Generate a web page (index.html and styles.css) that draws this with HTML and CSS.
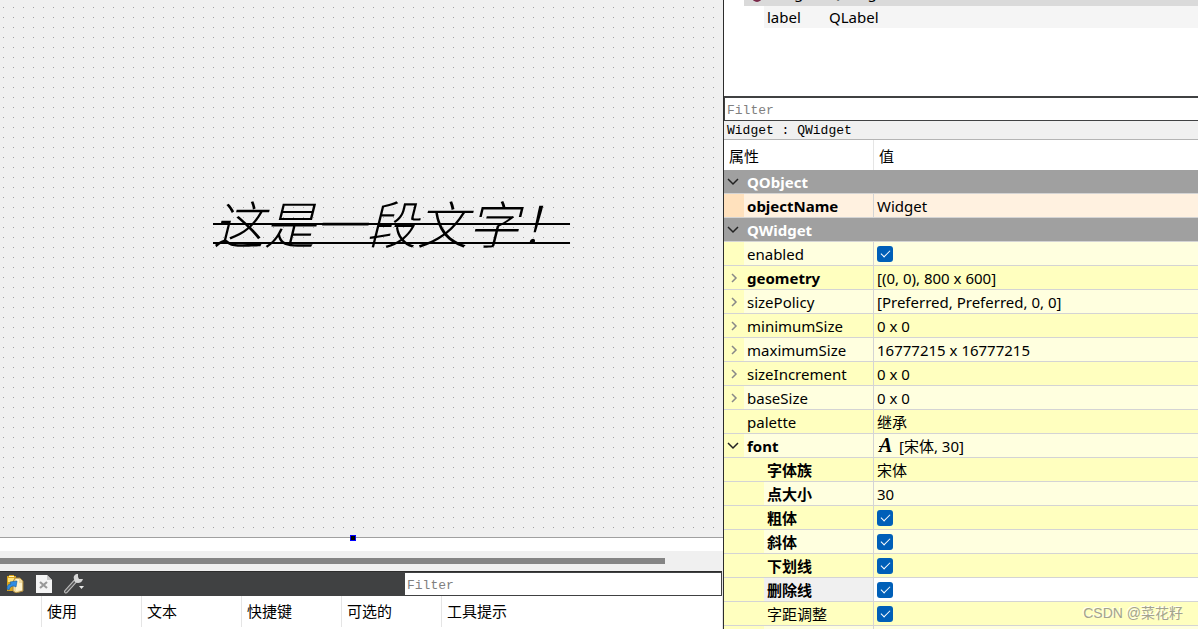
FILE: index.html
```html
<!DOCTYPE html>
<html lang="zh-CN">
<head>
<meta charset="utf-8">
<title>Designer</title>
<link rel="stylesheet" href="styles.css">
</head>
<body>
<div class="designer">
  <main class="workspace">
    <section class="canvas">
      <div class="form-grid">
        <span class="form-label">这是一段文字！</span>
        <span class="resize-handle"></span>
      </div>
      <div class="scrollbar"><div class="scroll-thumb"></div></div>
    </section>
    <section class="action-dock">
      <div class="toolbar">
        <button class="tool" aria-label="Copy">
          <svg width="18" height="18" viewBox="0 0 18 18">
            <path d="M1 1h2V0h5v1h2v15H1z" fill="#d9a41c"/>
            <path d="M2 3h7v4H2z" fill="#ffe27a"/>
            <path d="M3 1h5v1H3z" fill="#fff6c0"/>
            <path d="M9 3h5l3 3v10l-7 2-3-2V7z" fill="#f2dda0" stroke="#a8863c" stroke-width="1"/>
            <path d="M10 4h3v4h3v7l-6 1z" fill="#fff3cd"/>
            <path d="M1 14c0-3 1-5 4-5L4 7l7-1-1 6-2-1c-3 0-4 1-5 4z" fill="#2f8de4" stroke="#135a9f" stroke-width=".6"/>
          </svg>
        </button>
        <button class="tool" aria-label="Delete">
          <svg width="18" height="18" viewBox="0 0 18 18">
            <path d="M1 0h11l5 5v13H1z" fill="#f4f4f4"/>
            <path d="M12 0v5h5z" fill="#c9c9c9"/>
            <path d="M5 7l7 6m0-6l-7 6" stroke="#999" stroke-width="2.200"/>
          </svg>
        </button>
        <button class="tool tool-menu" aria-label="Configure">
          <svg width="22" height="20" viewBox="0 0 22 20">
            <path d="M2 17.500L11 7.500" stroke="#bdbdbd" stroke-width="4" stroke-linecap="round"/>
            <path d="M2 17.500L11 7.500" stroke="#565656" stroke-width="1.800" stroke-linecap="round"/>
            <path d="M14 0c-3 0-5 2-4 5 0 3 2 4 4 4 2 0 4-1 5-4l-4 0-1-2z" fill="#d6d6d6"/>
            <path d="M15 12h5l-2.500 3z" fill="#e8e8e8"/>
          </svg>
        </button>
        <input class="filter" type="text" placeholder="Filter" aria-label="Filter actions">
      </div>
      <table class="actions">
        <thead>
          <tr><th class="col-name"></th><th class="col">使用</th><th class="col">文本</th><th class="col">快捷键</th><th class="col">可选的</th><th>工具提示</th></tr>
        </thead>
      </table>
    </section>
  </main>

  <aside class="inspector">
    <section class="object-tree">
      <table class="objects">
        <tr class="selected"><td class="indent"></td><td class="object-name"><span class="object-icon"></span>Widget</td><td>QWidget</td></tr>
        <tr class="child"><td class="indent"></td><td class="object-name">label</td><td>QLabel</td></tr>
      </table>
    </section>
    <input class="filter filter-wide" type="text" placeholder="Filter" aria-label="Filter properties">
    <div class="object-title">Widget : QWidget</div>
    <table class="props">
      <thead><tr><th class="prop-col">属性</th><th>值</th></tr></thead>
      <tbody>
        <tr class="group"><td colspan="2"><svg class="arrow" viewBox="0 0 10 10"><path d="M0 2l5 5 5-5"/></svg>QObject</td></tr>
        <tr class="peach bold"><td>objectName</td><td>Widget</td></tr>
        <tr class="group"><td colspan="2"><svg class="arrow" viewBox="0 0 10 10"><path d="M0 2l5 5 5-5"/></svg>QWidget</td></tr>
        <tr class="light"><td><label for="enabled">enabled</label></td><td><input type="checkbox" id="enabled" checked></td></tr>
        <tr class="bold"><td><svg class="arrow closed" viewBox="0 0 10 10"><path d="M4 1l4 4-4 4"/></svg>geometry</td><td>[(0, 0), 800 x 600]</td></tr>
        <tr class="light"><td><svg class="arrow closed" viewBox="0 0 10 10"><path d="M4 1l4 4-4 4"/></svg>sizePolicy</td><td>[Preferred, Preferred, 0, 0]</td></tr>
        <tr><td><svg class="arrow closed" viewBox="0 0 10 10"><path d="M4 1l4 4-4 4"/></svg>minimumSize</td><td>0 x 0</td></tr>
        <tr class="light"><td><svg class="arrow closed" viewBox="0 0 10 10"><path d="M4 1l4 4-4 4"/></svg>maximumSize</td><td>16777215 x 16777215</td></tr>
        <tr><td><svg class="arrow closed" viewBox="0 0 10 10"><path d="M4 1l4 4-4 4"/></svg>sizeIncrement</td><td>0 x 0</td></tr>
        <tr class="light"><td><svg class="arrow closed" viewBox="0 0 10 10"><path d="M4 1l4 4-4 4"/></svg>baseSize</td><td>0 x 0</td></tr>
        <tr><td>palette</td><td>继承</td></tr>
        <tr class="light bold"><td><svg class="arrow" viewBox="0 0 10 10"><path d="M0 2l5 5 5-5"/></svg>font</td><td><span class="font-icon">A</span>[宋体, 30]</td></tr>
        <tr class="sub bold"><td>字体族</td><td>宋体</td></tr>
        <tr class="sub light bold"><td>点大小</td><td>30</td></tr>
        <tr class="sub bold"><td><label for="bold">粗体</label></td><td><input type="checkbox" id="bold" checked></td></tr>
        <tr class="sub light bold"><td><label for="italic">斜体</label></td><td><input type="checkbox" id="italic" checked></td></tr>
        <tr class="sub bold"><td><label for="underline">下划线</label></td><td><input type="checkbox" id="underline" checked></td></tr>
        <tr class="sub bold current"><td><label for="strike">删除线</label></td><td><input type="checkbox" id="strike" checked></td></tr>
        <tr class="sub"><td><label for="kerning">字距调整</label></td><td><input type="checkbox" id="kerning" checked></td></tr>
        <tr class="sub light"><td></td><td></td></tr>
      </tbody>
    </table>
  </aside>
  <div class="watermark">CSDN @菜花籽</div>
</div>
</body>
</html>
```
FILE: styles.css
```css
* { box-sizing: border-box; }

body {
  margin: 0;
  background: #fff;
  color: #000;
  font-family: "Noto Sans", "Noto Sans CJK SC", sans-serif;
  font-size: 15px;
}

.designer {
  position: relative;
  display: grid;
  grid-template-columns: minmax(0, 1fr) 475px;
  grid-template-rows: minmax(0, 1fr);
  height: 100vh;
  overflow: hidden;
}

table { width: 100%; border-collapse: separate; border-spacing: 0; table-layout: fixed; }
td, th { padding: 0; text-align: left; white-space: nowrap; }
th { font-weight: 400; }

/* Form editor */
.workspace {
  display: flex;
  flex-direction: column;
  min-height: 0;
}

.canvas {
  flex: 1;
  display: flex;
  flex-direction: column;
}

.form-grid {
  position: relative;
  flex: 1;
  margin-bottom: 13px;
  border-bottom: 1px solid #a0a0a0;
  background: #f0f0f0 conic-gradient(from 270deg at 1px 1px, #a0a0a0 90deg, #f0f0f0 0) 3px 7px / 10px 10px;
}

.form-label {
  position: absolute;
  left: 213px;
  top: 185px;
  font-family: "Noto Sans CJK SC", sans-serif;
  font-size: 51px;
  font-style: italic;
  font-weight: 300;
  line-height: 74px;
  white-space: nowrap;
  text-decoration: underline line-through 2px;
  text-underline-offset: -2px;
  text-decoration-skip-ink: none;
}

.resize-handle {
  position: absolute;
  left: 350px;
  bottom: -4px;
  width: 6px;
  height: 6px;
  background: #000;
  border: 1px solid #00f;
}

.scrollbar { padding: 7px 0; background: #f0f0f0; }
.scroll-thumb { width: 92%; height: 6px; background: #858585; }

/* Action editor */
.action-dock { height: 58px; border-right: 1px solid #e5e5e5; }

.toolbar {
  display: flex;
  align-items: center;
  height: 25px;
  padding-left: 6px;
  background: #404142;
  border-top: 1px solid #2d2d2d;
}

.tool {
  display: flex;
  width: 18px;
  margin-right: 11px;
  padding: 0;
  border: 0;
  background: none;
}
.tool-menu { width: 22px; margin: 0; }

.filter {
  width: 318px;
  height: 24px;
  margin-left: auto;
  padding: 3px 2px 1px;
  border: 1px solid #404142;
  border-radius: 0;
  outline: 0;
  background: #fff;
  font: 13px "Liberation Mono", monospace;
}
.filter::placeholder { color: #808080; }
.filter-wide { display: block; width: 100%; height: 25px; border-right: 0; border-top-width: 2px; }

.actions th {
  height: 31px;
  padding: 0 0 2px 5px;
  border-left: 1px solid #e5e5e5;
  font-family: "Noto Sans CJK SC", sans-serif;
}
.actions .col { width: 100px; }
.actions .col-name { width: 41px; border: 0; }

/* Inspector */
.inspector { border-left: 1px solid #2d2d2d; background: #fff; }

.object-tree { height: 96px; overflow: hidden; }
.objects { margin-top: -18px; }
.objects td { height: 22px; line-height: 20px; }
.objects .selected td { height: 24px; vertical-align: top; }
.objects .indent { width: 20px; }
.objects .object-name { width: 85px; padding-left: 23px; }
.selected td:not(.indent) { background: #dadada; }
.child td:not(.indent) { background: #f5f5f5; }
.child .object-name:not(.indent) { background: linear-gradient(to right, #fff 20px, #f5f5f5 20px); }
.object-icon {
  float: left;
  width: 10px;
  height: 10px;
  margin: 10px 0 0 -15px;
  border-radius: 5px;
  background: #7a2848;
}

.object-title {
  height: 19px;
  padding-left: 3px;
  border-bottom: 1px solid #b4b4b4;
  background: #f0f0f0;
  font: 13px/20px "Liberation Mono", monospace;
}

.props { --gutter: #ffffbf; --row: #ffffbf; }
.props th {
  height: 30px;
  padding-left: 5px;
  font-family: "Noto Sans CJK SC", sans-serif;
}
.props .prop-col { width: 150px; border-right: 1px solid #e5e5e5; }
.props td {
  height: 24px;
  padding-left: 3px;
  border-bottom: 1px solid #d4d4d4;
  background: var(--row);
  line-height: 22px;
}
.props td:first-child {
  padding-left: 23px;
  border-right: 1px solid #d4d4d4;
  background: linear-gradient(to right, var(--gutter) 20px, var(--row) 20px);
}
.props .sub td:first-child {
  padding-left: 43px;
  background: linear-gradient(to right, var(--gutter) 40px, var(--row) 40px);
  font-family: "Noto Sans CJK SC", sans-serif;
}
.light { --row: #ffffdf; }
.peach { --gutter: #ffe1bd; --row: #fff1e0; }
.current { --row: #fff; }
.props .current td:first-child { --row: #f0f0f0; }
.bold td:first-child { font-weight: 700; }
.props .group td:first-child {
  border-right: 0;
  background: #a0a0a0;
  color: #fff;
  font-weight: 700;
}

.arrow {
  float: left;
  width: 10px;
  height: 10px;
  margin: 6px 0 0 -19px;
  overflow: visible;
  fill: none;
  stroke: #222;
  stroke-width: 1.5;
}
.arrow.closed { stroke: #888; }

input[type="checkbox"] {
  appearance: none;
  display: grid;
  place-items: center;
  width: 16px;
  height: 16px;
  margin: 0;
  border-radius: 3px;
  background: #005fb8;
}
input[type="checkbox"]::before {
  content: "";
  width: 8px;
  height: 4px;
  margin-bottom: 2px;
  border: solid #fff;
  border-width: 0 0 1px 1px;
  transform: rotate(-45deg);
}

.font-icon {
  display: inline-block;
  width: 22px;
  padding-left: 2px;
  background: linear-gradient(#000, #000) 2px 11px / 9px 1px no-repeat;
  font: italic 700 20px/20px "Liberation Serif", serif;
}

.watermark {
  position: absolute;
  right: 15px;
  bottom: 6px;
  color: #a3a38f;
  font: 14px/20px "Liberation Sans", "Noto Sans CJK SC", sans-serif;
  text-shadow: -1px -1px 0 #fffff0;
}
```
